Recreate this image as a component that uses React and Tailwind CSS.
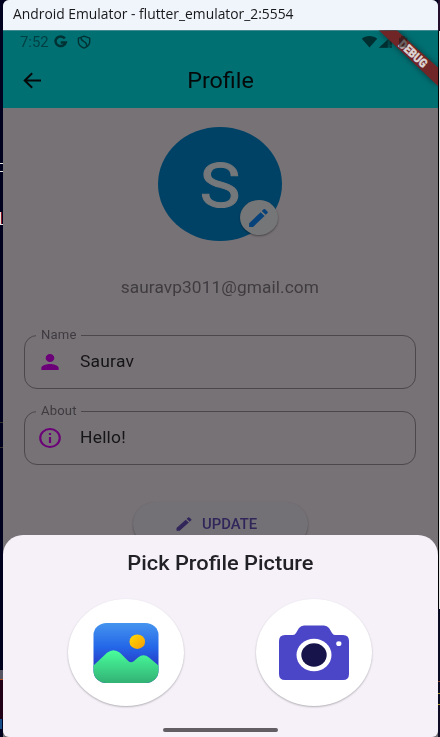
const PENCIL =
  "M3 17.25V21h3.75L17.81 9.94l-3.75-3.75L3 17.25zM20.71 7.04a1 1 0 0 0 0-1.41l-2.34-2.34a1 1 0 0 0-1.41 0l-1.83 1.83 3.75 3.75 1.83-1.83z";

function StatusIcons() {
  return (
    <svg className="absolute left-0 -top-px h-[78px] w-[435px]" viewBox="3 30 435 78">
      <path d="M64.9 38.4A5.2 4.8 0 1 0 65.8 42.4H60.7" fill="none" stroke="#003234" strokeWidth="2.5" />
      <path d="M84 36.2L89.7 38.2V42C89.7 45 87.5 46.7 84 48.1C80.5 46.7 78.4 45 78.4 42V38.2Z" fill="none" stroke="#003234" strokeWidth="1.4" />
      <path d="M81 37.5Q80.8 40 84 41.6Q87.2 43.2 86.6 46.5" fill="none" stroke="#003234" strokeWidth="1.4" />
      <path d="M361.8 38.7C366 35 373 35 377.2 38.7L369.5 47.5Z" fill="#002f31" />
      <path d="M379 47.8L391.7 36V47.8Z" fill="#004d50" />
      <path d="M379 47.8L387.7 39.7V47.8Z" fill="#002f31" />
      <path d="M391 37.5V45M391 46.2V47.8" stroke="#002f31" strokeWidth="1.3" />
      <path d="M379 30.5H397L438 67.5V86Z" fill="#702526" className="drop-shadow-[0_0_3px_rgba(0,0,0,0.5)]" />
      <text
        x="0"
        y="4.2"
        textAnchor="middle"
        transform="translate(413.2 53.8) rotate(42.5)"
        textLength="34"
        lengthAdjust="spacingAndGlyphs"
        className="fill-[#dcd5d5] stroke-[#dcd5d5] stroke-[0.4px] font-['Roboto'] text-[12px] font-black"
      >
        DEBUG
      </text>
      <path d="M399 37.8H401V36H405V37.8H407.3V47.5H399Z" fill="#1f1718" fillOpacity="0.6" />
    </svg>
  );
}

function Field({ label, value, children }) {
  return (
    <fieldset className="flex h-[61px] w-[392px] rounded-[13px] border border-[#4b474b] pl-[8px]">
      <legend className="ml-[3px] h-[14px] pl-[5px] pr-[7px] text-[#3e3b40]">
        <span className="block origin-left scale-x-[1.09] text-[12px] leading-[14px] tracking-[0.15px]">{label}</span>
      </legend>
      <div className="-mt-[3px] flex h-[46px] items-center">
        {children}
        <span className="ml-[21px] origin-left scale-x-[1.09] text-[16px] leading-5 tracking-[0.2px] text-[#151417]">{value}</span>
      </div>
    </fieldset>
  );
}

function Strip({ right }) {
  return right ? (
    <div className="flex w-[2px] shrink-0 flex-col">
      <div className="h-[31px] bg-[#24102d]" />
      <div className="h-[578px] border-l border-black bg-[#e8e8e8]" />
      <div className="h-[72px] bg-[#080b22]" />
      <div className="h-px bg-[#85402c]" />
      <div className="h-[11px] bg-[#080b22]" />
      <div className="h-px bg-[#aa9a24]" />
      <div className="h-[10px] bg-[#080b22]" />
      <div className="h-px bg-[#aa9a24]" />
      <div className="flex-1 bg-[#100b24]" />
    </div>
  ) : (
    <div className="flex w-[3px] shrink-0 flex-col bg-[#00001f]">
      <div className="mt-[163px] h-px bg-[#e6e2e4]" />
      <div className="mt-[7px] h-px bg-[#e6e2e4]" />
      <div className="mt-[40px] h-[12px] w-[2px] border-r border-[#8a1424] bg-[#e6e2da]" />
      <div className="h-px bg-[#e6e2e4]" />
      <div className="mt-[197px] h-px bg-[#35332c]" />
      <div className="mt-[24px] h-px bg-[#35332c]" />
      <div className="mt-[222px] h-[9px] bg-[#555563]" />
      <div className="h-px bg-[#b34d24]" />
      <div className="h-[39px] bg-[#210018]" />
      <div className="h-[10px] w-[2px] bg-[#174d88]" />
    </div>
  );
}

export default function App() {
  return (
    <div className="flex h-[737px] w-[440px] overflow-hidden bg-[#00001f] font-['Roboto',sans-serif]">
      <Strip />
      <main className="relative flex w-[435px] shrink-0 flex-col overflow-hidden rounded-t-[6px] bg-[#777276]">
        <div className="flex h-[30px] shrink-0 items-center bg-[#f0f4fb] pb-[3px] pl-[10px] font-['Open_Sans',sans-serif] text-[14px] text-[#18191b]">
          <span className="origin-left scale-x-[0.989] whitespace-nowrap">Android Emulator - flutter_emulator_2:5554</span>
        </div>
        <header className="relative h-[78px] shrink-0 border-t border-[#408a91] bg-[#007073]">
          <div className="flex h-[22px] items-center pl-[17px] text-[14px] text-[#003f42]">
            <span className="origin-left scale-x-[1.06]">7:52</span>
          </div>
          <div className="grid h-[54px] grid-cols-[60px_1fr_60px] items-center">
            <svg className="ml-[20px] h-[18px] w-[19px]" viewBox="0 0 19 18">
              <path d="M18 9.5H2M9.2 2.2L1.7 9.5L9.2 16.8" fill="none" stroke="#06090a" strokeWidth="2" />
            </svg>
            <h1 className="scale-x-[1.06] pt-[2px] text-center text-[22px] leading-7 text-[#050909]">Profile</h1>
          </div>
          <StatusIcons />
        </header>

        <section className="flex h-[427px] w-[434px] shrink-0 flex-col items-center">
          <div className="relative mt-[19px] flex h-[114px] w-[124px] shrink-0 items-center justify-center rounded-[50%] bg-[#004266]">
            <span className="scale-x-[1.12] pt-[4px] text-[61px] leading-none text-[#75787a] [-webkit-text-stroke:1px_#75787a]">S</span>
            <div className="absolute left-[82px] top-[73px] flex h-[35px] w-[38px] items-center justify-center rounded-[50%] bg-[#757677] shadow-[0_1px_2px_rgba(0,0,0,0.4)]">
              <svg className="h-[24px] w-[25px] -translate-x-px" viewBox="0 0 24 24" preserveAspectRatio="none">
                <path d={PENCIL} fill="#07437a" />
              </svg>
            </div>
          </div>
          <p className="mt-[36px] scale-x-[1.08] whitespace-nowrap text-[16px] leading-[22px] tracking-[0.09px] text-[#3f3c40]">sauravp3011@gmail.com</p>
          <div className="mt-[29px] flex flex-col gap-[15px]">
            <Field label="Name" value="Saurav">
              <svg className="h-[24px] w-[26px] translate-x-[4px]" viewBox="0 0 24 24" preserveAspectRatio="none">
                <path d="M12 12a4 4 0 1 0 0-8 4 4 0 0 0 0 8zm0 2c-2.67 0-8 1.34-8 4v2h16v-2c0-2.66-5.33-4-8-4z" fill="#6b0078" />
              </svg>
            </Field>
            <Field label="About" value="Hello!">
              <svg className="h-[24px] w-[26px] translate-x-[4px]" viewBox="0 0 24 24" preserveAspectRatio="none">
                <path d="M11 7h2v2h-2zm0 4h2v6h-2zm1-9a10 10 0 1 0 0 20 10 10 0 0 0 0-20zm0 18a8 8 0 1 1 0-16 8 8 0 0 1 0 16z" fill="#6b0078" />
              </svg>
            </Field>
          </div>
          <div className="mt-[37px] flex h-[44px] w-[175px] shrink-0 items-center gap-[8px] rounded-full bg-[#737176] pl-[41px] shadow-[0_1px_2px_rgba(0,0,0,0.35)]">
            <svg className="h-[18px] w-[20px]" viewBox="0 0 24 24" preserveAspectRatio="none">
              <path d={PENCIL} fill="#31255a" />
            </svg>
            <span className="origin-left scale-x-[1.06] text-[14px] font-medium text-[#31255a]">UPDATE</span>
          </div>
        </section>

        <div className="absolute left-0 top-[535px] flex h-[202px] w-[435px] flex-col items-center rounded-b-[6px] rounded-t-[20px] bg-[#f6f1f9] pr-px">
          <h2 className="mt-[15px] scale-x-[1.09] whitespace-nowrap text-[20px] font-medium leading-[26px] text-[#222126]">Pick Profile Picture</h2>
          <div className="mt-[23px] flex gap-[72px]">
            <button className="flex h-[107px] w-[116px] items-center justify-center rounded-[50%] bg-white shadow-[0_1px_2px_rgba(0,0,0,0.28)]">
              <svg className="h-[60px] w-[66px]" viewBox="0 0 66 60">
                <defs>
                  <linearGradient id="sky" x1="0" y1="0" x2="0" y2="1">
                    <stop offset="0" stopColor="#4594ef" />
                    <stop offset="0.4" stopColor="#2467e8" />
                    <stop offset="0.68" stopColor="#2740ca" />
                  </linearGradient>
                  <linearGradient id="hills" x1="0" y1="0" x2="0" y2="1">
                    <stop offset="0" stopColor="#49ff9c" />
                    <stop offset="1" stopColor="#32b174" />
                  </linearGradient>
                  <linearGradient id="sun" x1="0" y1="0" x2="1" y2="1">
                    <stop offset="0.2" stopColor="#ffcf02" />
                    <stop offset="1" stopColor="#f79a08" />
                  </linearGradient>
                </defs>
                <rect x="0.5" width="65" height="60" rx="13" ry="12" fill="url(#sky)" />
                <ellipse cx="44.3" cy="18.7" rx="7.8" ry="7.3" fill="url(#sun)" />
                <path d="M.5 42.5L14 29.8Q20.5 24.5 27 29.8L35.2 38Q38 40.5 41 38L45 34.4Q50.5 30 56 34.4L65.5 42.5V48A13 12 0 0 1 52.5 60H13.5A13 12 0 0 1 .5 48Z" fill="url(#hills)" />
              </svg>
            </button>
            <button className="flex h-[107px] w-[116px] items-center justify-center rounded-[50%] bg-white shadow-[0_1px_2px_rgba(0,0,0,0.28)]">
              <svg className="h-[56px] w-[70px]" viewBox="0 0 70 56">
                <path d="M6 10H14Q16 10 17 8L20 3Q22 .5 25 .5H45Q48 .5 50 3L53 8Q54 10 56 10H64Q70 10 70 16V49Q70 55 64 55H6Q0 55 0 49V16Q0 10 6 10Z" fill="#4b45c8" />
                <ellipse cx="35" cy="30" rx="17.5" ry="16.2" fill="white" />
                <ellipse cx="35" cy="30" rx="12.7" ry="11.7" fill="#17144c" />
                <ellipse cx="59.8" cy="18.7" rx="2.6" ry="2.4" fill="white" />
              </svg>
            </button>
          </div>
          <div className="mt-[22px] h-[4px] w-[115px] rounded-full bg-[#625e64]" />
        </div>
      </main>
      <Strip right />
    </div>
  );
}
